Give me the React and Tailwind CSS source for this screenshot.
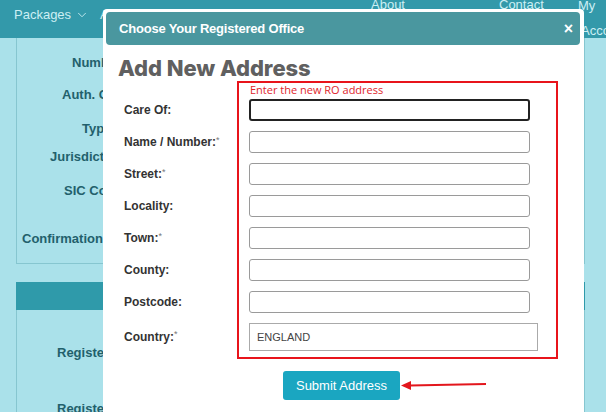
import { ChevronDown } from "lucide-react";

const fields = [
  { label: "Care Of:", req: false },
  { label: "Name / Number:", req: true },
  { label: "Street:", req: true },
  { label: "Locality:", req: false },
  { label: "Town:", req: true },
  { label: "County:", req: false },
  { label: "Postcode:", req: false },
];

function NavBar() {
  return (
    <div className="h-[38px] bg-[#3399aa] flex items-start text-[13px] leading-[15px] text-[#cdeff4] pl-[14px] pt-[7px] overflow-hidden whitespace-nowrap">
      <div className="w-[86px] shrink-0 flex items-center gap-[4px]">
        Packages <ChevronDown size={14} strokeWidth={1.5} />
      </div>
      <div className="w-[150px] shrink-0 flex items-center gap-[4px]">
        Additional Services <ChevronDown size={14} strokeWidth={1.5} />
      </div>
      <div className="w-[121px] shrink-0">Company Formation</div>
      <div className="w-[62px] shrink-0 leading-[25px] mt-[-15px]">
        About
        <br />
        Us
      </div>
      <div className="w-[66px] shrink-0">Client Login</div>
      <div className="w-[79px] shrink-0 leading-[25px] mt-[-15px]">
        Contact
        <br />
        Us
      </div>
      <div className="shrink-0 leading-[25px] mt-[-14px]">
        My
        <br />
        <span className="pl-[3px]">Account</span>
      </div>
    </div>
  );
}

function Background() {
  const rows = [
    { text: "Number:", h: "h-[32px]", pl: "pl-[55px]" },
    { text: "Auth. Code:", h: "h-[32px]", pl: "pl-[45px]" },
    { text: "Type:", h: "h-[36px]", pl: "pl-[65px]" },
    { text: "Jurisdiction:", h: "h-[20px]", pl: "pl-[33px]" },
    { text: "SIC Code:", h: "h-[48px]", pl: "pl-[47px]" },
    { text: "Confirmation Date:", h: "h-[48px]", pl: "pl-[5px]" },
  ];
  return (
    <div className="pl-[16px] pr-[21px]">
      {/* company details card */}
      <div className="border-l border-r border-b border-[#86c6d0] pt-[9px]">
        {rows.map((r) => (
          <div
            key={r.text}
            className={`${r.h} ${r.pl} flex items-center text-[13px] font-bold text-[#22606c] whitespace-nowrap`}
          >
            {r.text}
          </div>
        ))}
      </div>
      <div className="mt-[18px] h-[28px] bg-[#2f9aaa]" />
      <div className="border-l border-r border-[#86c6d0] h-[120px] text-[13px] font-bold text-[#22606c] pl-[40px] whitespace-nowrap">
        <div className="pt-[33px]">Registered Office:</div>
        <div className="pt-[36px]">Registered Office Service:</div>
      </div>
    </div>
  );
}

function TextInput({ focused }) {
  return (
    <div
      className={
        focused
          ? "h-[22px] w-[281px] rounded-[3px] border-2 border-[#222] bg-white"
          : "h-[22px] w-[281px] rounded-[3px] border border-[#9a9a9a] bg-white"
      }
    />
  );
}

function Modal() {
  return (
    <div className="absolute left-[103px] top-[9px] w-[481px] h-[420px] bg-white rounded-[4px] pt-[3px] pl-[3px] pr-[4px]">
      <div className="h-[33px] rounded-[4px] bg-[#4a979f] flex items-center justify-between pl-[13px] pr-[7px] text-white">
        <span className="text-[13px] font-bold tracking-[-0.2px]">Choose Your Registered Office</span>
        <span className="text-[16px] font-bold leading-none">×</span>
      </div>

      <h2 className="mt-[10px] ml-[12px] text-[22px] leading-[26px] font-extrabold text-[#606060] font-['Inter',sans-serif] tracking-[-0.1px]">
        Add New Address
      </h2>

      <div className="flex ml-[18px]">
        {/* labels */}
        <div className="w-[113px] pt-[18px] flex flex-col gap-[10px] text-[12px] font-bold text-[#333]">
          {fields.map((f) => (
            <div key={f.label} className="h-[22px] flex items-center">
              {f.label}
              {f.req && <span className="text-[9px] font-normal text-[#777] self-start mt-[3px]">*</span>}
            </div>
          ))}
          <div className="h-[28px] flex items-center">
            Country:
            <span className="text-[9px] font-normal text-[#777] self-start mt-[5px]">*</span>
          </div>
        </div>

        {/* red outlined input group */}
        <div className="w-[321px] border-2 border-[#e8141b] pl-[10px] pb-[6px]">
          <div className="text-[11px] leading-[14px] text-[#e0242b] font-['Open_Sans',sans-serif] pl-[1px]">
            Enter the new RO address
          </div>
          <div className="mt-[2px] flex flex-col gap-[10px]">
            {fields.map((f, i) => (
              <TextInput key={f.label} focused={i === 0} />
            ))}
            <div className="h-[28px] w-[289px] border border-[#aaa] flex items-center pl-[7px] text-[11px] text-[#444]">
              ENGLAND
            </div>
          </div>
        </div>
      </div>

      <button className="mt-[12px] ml-[177px] w-[117px] h-[29px] rounded-[3px] bg-[#1aa6c1] text-white text-[13px]">
        Submit Address
      </button>
    </div>
  );
}

export default function App() {
  return (
    <div className="relative w-[606px] h-[412px] overflow-hidden bg-[#aae1ea] font-['Liberation_Sans',Arial,sans-serif]">
      <NavBar />
      <Background />
      <Modal />
      {/* red pointer arrow */}
      <svg className="absolute left-[398px] top-[376px]" width="92" height="18" viewBox="0 0 92 18">
        <line x1="12" y1="9.5" x2="88" y2="8" stroke="#e3161c" strokeWidth="2.2" />
        <polygon points="3,9.6 13,5 13,14" fill="#e3161c" />
      </svg>
    </div>
  );
}
